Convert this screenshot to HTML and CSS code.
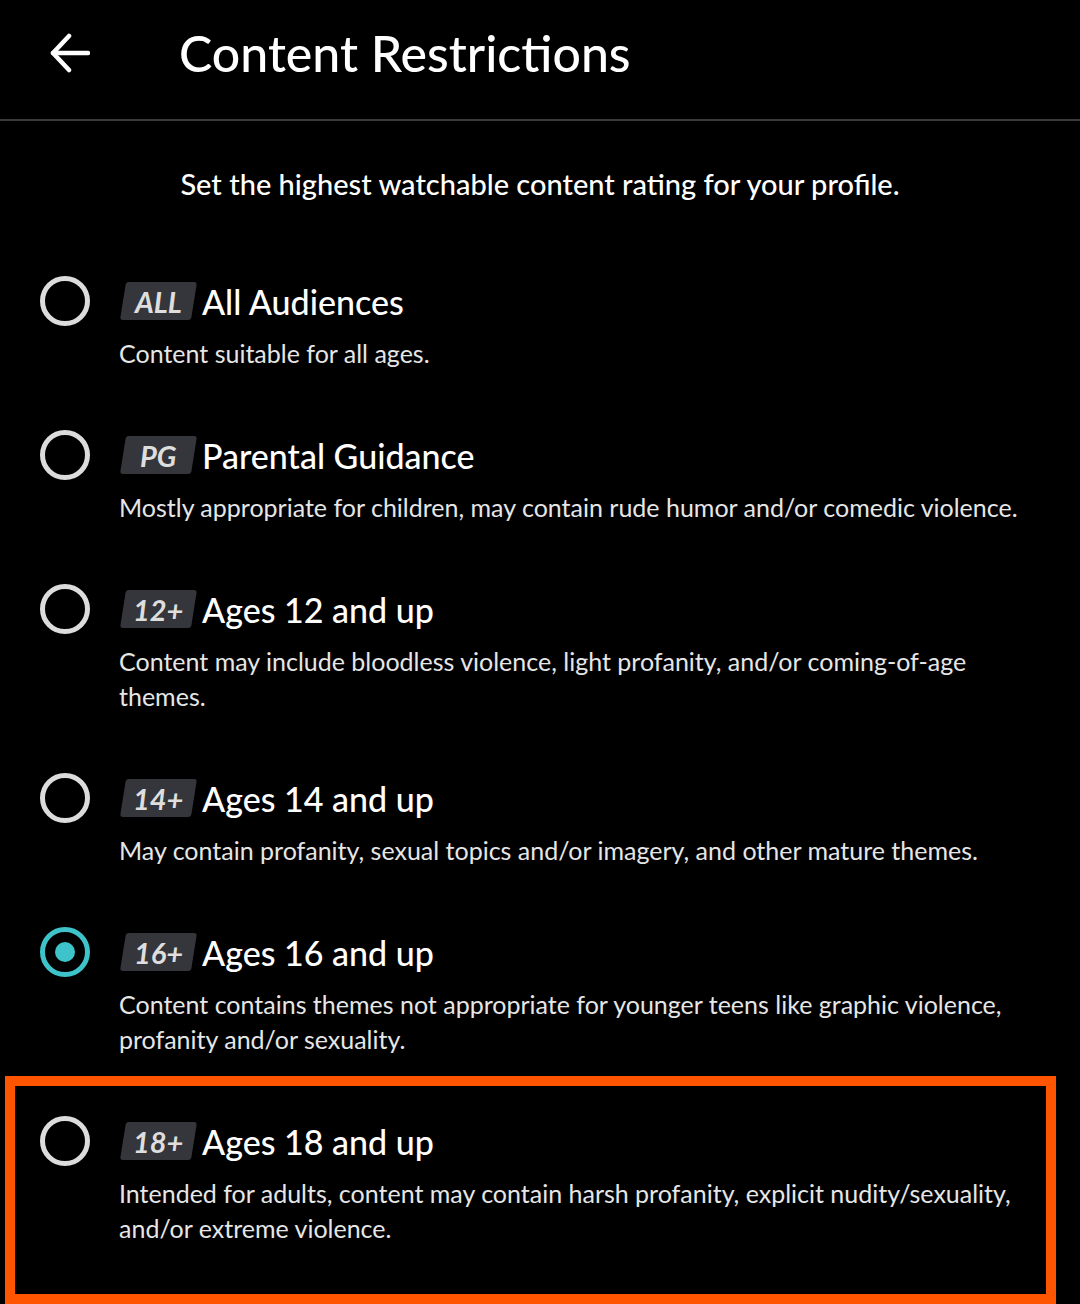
FILE: index.html
```html
<!DOCTYPE html>
<html lang="en">
<head>
  <meta charset="UTF-8">
  <title>Content Restrictions</title>
  <link rel="stylesheet" href="styles.css">
</head>
<body>

  <header class="topbar">
    <button class="back" aria-label="Back">
      <svg width="40" height="40" viewBox="0 0 40 40" fill="none" stroke="#fff" stroke-width="4.5" stroke-linecap="round" stroke-linejoin="round">
        <path d="M38 20H3"/>
        <path d="M19 3L3 20l16 17"/>
      </svg>
    </button>
    <h1>Content Restrictions</h1>
  </header>

  <p class="intro">Set the highest watchable content rating for your profile.</p>

  <ul class="options">
    <li class="option">
      <span class="radio"></span>
      <div class="head"><span class="badge"><span>ALL</span></span><span class="name">All Audiences</span></div>
      <p class="desc">Content suitable for all ages.</p>
    </li>
    <li class="option">
      <span class="radio"></span>
      <div class="head"><span class="badge"><span>PG</span></span><span class="name">Parental Guidance</span></div>
      <p class="desc">Mostly appropriate for children, may contain rude humor and/or comedic violence.</p>
    </li>
    <li class="option">
      <span class="radio"></span>
      <div class="head"><span class="badge"><span>12+</span></span><span class="name">Ages 12 and up</span></div>
      <p class="desc">Content may include bloodless violence, light profanity, and/or coming-of-age themes.</p>
    </li>
    <li class="option">
      <span class="radio"></span>
      <div class="head"><span class="badge"><span>14+</span></span><span class="name">Ages 14 and up</span></div>
      <p class="desc">May contain profanity, sexual topics and/or imagery, and other mature themes.</p>
    </li>
    <li class="option">
      <span class="radio checked"></span>
      <div class="head"><span class="badge"><span>16+</span></span><span class="name">Ages 16 and up</span></div>
      <p class="desc">Content contains themes not appropriate for younger teens like graphic violence, profanity and/or sexuality.</p>
    </li>
    <li class="option flagged">
      <span class="radio"></span>
      <div class="head"><span class="badge"><span>18+</span></span><span class="name">Ages 18 and up</span></div>
      <p class="desc">Intended for adults, content may contain harsh profanity, explicit nudity/sexuality, and/or extreme violence.</p>
    </li>
  </ul>

</body>
</html>
```

FILE: styles.css
```css
body {
  margin: 0;
  background: #000;
  color: #fff;
  font-family: Lato, "Noto Sans", sans-serif;
  overflow: hidden;
}

.topbar {
  display: flex;
  align-items: center;
  height: 119px;
  border-bottom: 2px solid #3a3a3a;
}

.back {
  background: none;
  border: 0;
  padding: 0;
  margin: 0 0 14px 50px;
  display: flex;
}

.topbar h1 {
  margin: 0 0 14px 89px;
  font-size: 50px;
  font-weight: 500;
}

.intro {
  margin: 45px 0 0;
  text-align: center;
  font-size: 29px;
  line-height: 36px;
  font-weight: 500;
}

.options {
  list-style: none;
  margin: 74px 0 0;
  padding: 0 0 0 40px;
}

.option {
  display: grid;
  grid-template-columns: 50px 1fr;
  column-gap: 29px;
  row-gap: 10px;
  padding-right: 40px;
}

.option + .option {
  margin-top: 59px;
}

.radio {
  box-sizing: border-box;
  width: 50px;
  height: 50px;
  border: 5px solid #dcdcdc;
  border-radius: 50%;
  display: flex;
  align-items: center;
  justify-content: center;
}

.radio.checked {
  border-color: #3fc3cb;
}

.radio.checked::after {
  content: "";
  width: 20px;
  height: 20px;
  border-radius: 50%;
  background: #3fc3cb;
}

.head {
  display: flex;
  align-items: center;
  gap: 8px;
  height: 50px;
}

.badge {
  width: 71px;
  height: 38px;
  margin-left: 4px;
  background: #35363b;
  border-radius: 3px;
  transform: skewX(-9deg);
  display: flex;
  align-items: center;
  justify-content: center;
}

.badge span {
  transform: skewX(9deg);
  font-size: 29px;
  font-style: italic;
  font-weight: 700;
  color: #dedede;
}

.name {
  font-size: 34px;
  font-weight: 500;
}

.desc {
  grid-column: 2;
  margin: 0;
  font-size: 25px;
  line-height: 35px;
  color: #e6e6e6;
}

.option.flagged {
  margin: 19px 24px 0 -35px;
  padding: 30px 0 48px 25px;
  border: 10px solid #ff5500;
}
```
